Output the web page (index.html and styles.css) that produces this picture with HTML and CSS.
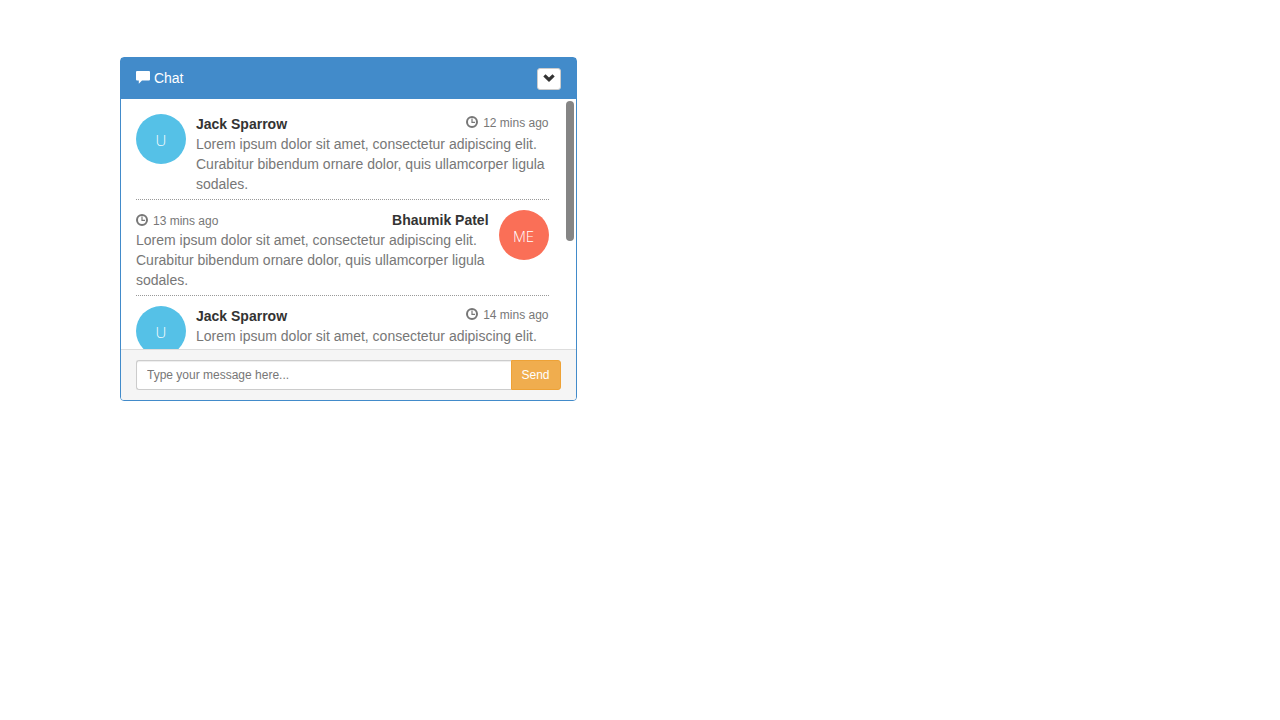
FILE: index.html
```
<!DOCTYPE html>
<html lang="en">
<head>
    <meta charset="UTF-8">
    <meta name="viewport" content="width=device-width, initial-scale=1.0">
    <title>Chat</title>
    <link rel="stylesheet" href="styles.css">
</head>
<body>
    <!-- Shared icons -->
    <svg class="icon-defs" aria-hidden="true">
        <symbol id="icon-comment" viewBox="0 0 14 14">
            <path d="M1 1h12A1 1 0 0 1 14 2v7.500A1 1 0 0 1 13 10.500H6L2.800 13.800V10.500H1A1 1 0 0 1 0 9.500v-7.500A1 1 0 0 1 1 1z" fill="currentColor"/>
        </symbol>
        <symbol id="icon-time" viewBox="0 0 12 12">
            <circle cx="6" cy="6" r="5" fill="none" stroke="currentColor" stroke-width="2"/>
            <path d="M6 2.500v3.800h3" fill="none" stroke="currentColor" stroke-width="1.200"/>
        </symbol>
        <symbol id="icon-chevron-down" viewBox="0 0 12 12">
            <path d="M0.300 3.400L2.500 1.200L6 4.500L9.500 1.200L11.700 3.400L6 9z" fill="currentColor"/>
        </symbol>
    </svg>

    <div class="container">
        <div class="panel">
            <div class="panel-heading">
                <span class="panel-title"><svg class="icon icon-lg"><use href="#icon-comment"/></svg> Chat</span>
                <button type="button" class="btn-toggle" aria-label="Chat options"><svg class="icon"><use href="#icon-chevron-down"/></svg></button>
            </div>
            <div class="panel-body">
                <ul class="chat">
                    <li class="left">
                        <span class="avatar avatar-user">U</span>
                        <div class="chat-body">
                            <div class="header">
                                <strong>Jack Sparrow</strong>
                                <small><svg class="icon"><use href="#icon-time"/></svg>12 mins ago</small>
                            </div>
                            <p>Lorem ipsum dolor sit amet, consectetur adipiscing elit. Curabitur bibendum ornare dolor, quis ullamcorper ligula sodales.</p>
                        </div>
                    </li>
                    <li class="right">
                        <span class="avatar avatar-me">ME</span>
                        <div class="chat-body">
                            <div class="header">
                                <small><svg class="icon"><use href="#icon-time"/></svg>13 mins ago</small>
                                <strong>Bhaumik Patel</strong>
                            </div>
                            <p>Lorem ipsum dolor sit amet, consectetur adipiscing elit. Curabitur bibendum ornare dolor, quis ullamcorper ligula sodales.</p>
                        </div>
                    </li>
                    <li class="left">
                        <span class="avatar avatar-user">U</span>
                        <div class="chat-body">
                            <div class="header">
                                <strong>Jack Sparrow</strong>
                                <small><svg class="icon"><use href="#icon-time"/></svg>14 mins ago</small>
                            </div>
                            <p>Lorem ipsum dolor sit amet, consectetur adipiscing elit.</p>
                        </div>
                    </li>
                </ul>
                <div class="scrollbar"></div>
            </div>
            <form class="panel-footer">
                <input id="btn-input" type="text" placeholder="Type your message here..." aria-label="Message">
                <button type="button" class="btn-send">Send</button>
            </form>
        </div>
    </div>
</body>
</html>
```
FILE: styles.css
```
* {
    box-sizing: border-box;
}

body {
    margin: 0;
    font-family: "Liberation Sans", Arial, sans-serif;
    font-size: 14px;
    line-height: 20px;
    color: #333;
    background: #fff;
}

.container {
    padding: 57px 120px;
}

.icon-defs {
    position: absolute;
    width: 0;
    height: 0;
}

.icon {
    width: 12px;
    height: 12px;
    vertical-align: -1px;
}

.icon-lg {
    width: 14px;
    height: 14px;
    vertical-align: -1px;
}

/* Panel */
.panel {
    width: 43.9%;
    min-width: 320px;
    border: 1px solid #428bca;
    border-radius: 4px;
    background: #fff;
}

.panel-heading {
    display: flex;
    justify-content: space-between;
    align-items: flex-start;
    padding: 10px 15px 9px;
    color: #fff;
    background: #428bca;
}

.btn-toggle {
    display: flex;
    align-items: center;
    justify-content: center;
    width: 24px;
    height: 22px;
    padding: 0;
    border: 1px solid #ccc;
    border-radius: 3px;
    color: #333;
    background: #fff;
    cursor: pointer;
}

.panel-body {
    position: relative;
    height: 250px;
    overflow: hidden;
}

.scrollbar {
    position: absolute;
    top: 2px;
    right: 2px;
    width: 8px;
    height: 140px;
    border-radius: 4px;
    background: #858585;
}

/* Messages */
.chat {
    list-style: none;
    height: 100%;
    margin: 0;
    padding: 15px 27px 0 15px;
    overflow: hidden;
}

.chat li {
    display: flex;
    gap: 10px;
    margin-bottom: 10px;
    padding-bottom: 5px;
    border-bottom: 1px dotted #999;
}

.chat li.right {
    flex-direction: row-reverse;
}

.avatar {
    flex: none;
    width: 50px;
    height: 50px;
    border-radius: 50%;
    font-family: "Open Sans", sans-serif;
    font-size: 15px;
    font-weight: 300;
    line-height: 52px;
    text-align: center;
    color: #fff;
}

.avatar-user {
    background: #55c1e7;
}

.avatar-me {
    background: #fa6f57;
}

.chat-body {
    flex: 1;
}

.header {
    display: flex;
    justify-content: space-between;
    height: 20px;
}

.header small {
    font-size: 12px;
    line-height: 18px;
    color: #777;
}

.header .icon {
    margin-right: 5px;
}

.right small {
    line-height: 22px;
}

.chat-body p {
    margin: 0;
    color: #777;
}

/* Message box */
.panel-footer {
    display: flex;
    padding: 10px 15px;
    border-top: 1px solid #ddd;
    border-radius: 0 0 3px 3px;
    background: #f5f5f5;
}

.panel-footer input {
    flex: 1;
    min-width: 0;
    height: 30px;
    padding: 5px 10px;
    border: 1px solid #ccc;
    border-right: 0;
    border-radius: 3px 0 0 3px;
    font: inherit;
    font-size: 12px;
    box-shadow: inset 0 1px 1px rgba(0, 0, 0, 0.075);
}

.panel-footer input::placeholder {
    color: #777;
}

.btn-send {
    height: 30px;
    padding: 5px 10px;
    border: 1px solid #eea236;
    border-radius: 0 3px 3px 0;
    font: inherit;
    font-size: 12px;
    line-height: 18px;
    color: #fff;
    background: #f0ad4e;
    cursor: pointer;
}
```
